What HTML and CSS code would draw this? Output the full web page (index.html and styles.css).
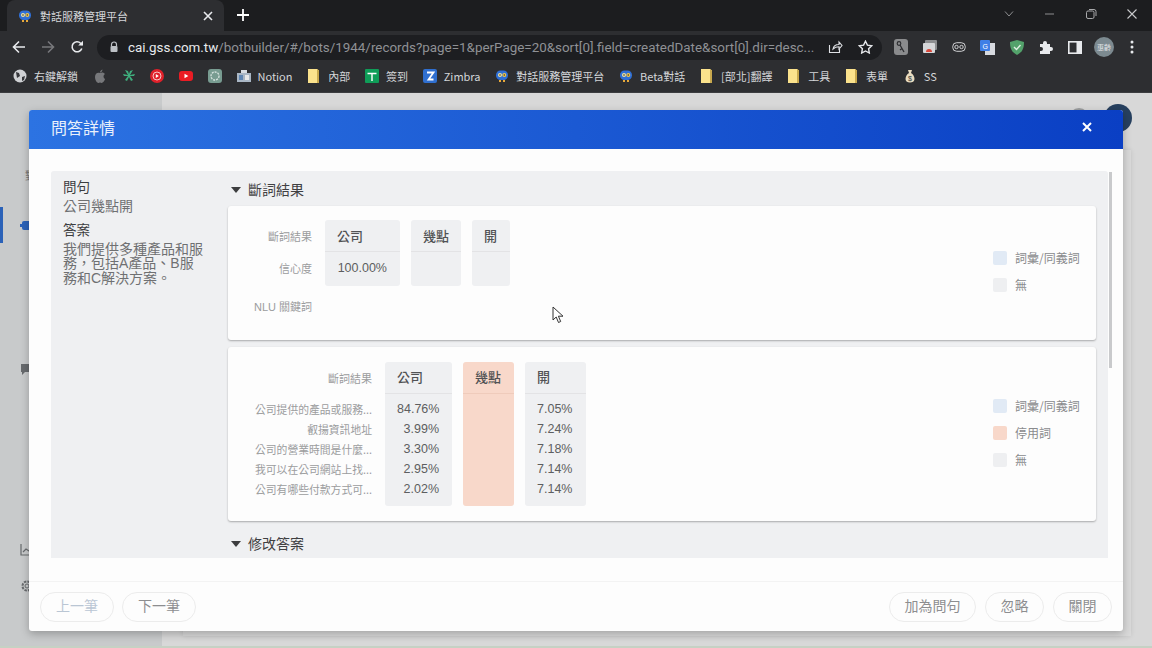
FILE: index.html
```html
<!DOCTYPE html>
<html lang="zh-TW">
<head>
  <meta charset="UTF-8" />
  <title>對話服務管理平台</title>
  <link rel="stylesheet" href="styles.css">
</head>
<body>

  <svg class="defs" width="0" height="0">
    <symbol id="bot" viewBox="0 0 14 14">
      <rect x="1" y="1.5" width="12" height="9.5" rx="4.5" fill="#2f6fd6"/>
      <circle cx="5" cy="6" r="2" fill="#f4e6a0"/>
      <circle cx="9.3" cy="6" r="2" fill="#f4c94a"/>
      <circle cx="5" cy="6" r=".8" fill="#333"/>
      <circle cx="9.3" cy="6" r=".8" fill="#333"/>
      <rect x="4" y="11" width="2" height="2" fill="#e8a93a"/>
      <rect x="8" y="11" width="2" height="2" fill="#e8a93a"/>
    </symbol>
    <symbol id="folder" viewBox="0 0 14 14">
      <path d="M1 0h9l2 1.5V14H1z" fill="#fbe28c"/>
      <path d="M10 0l2 1.5V14H10z" fill="#c9a94e"/>
    </symbol>
  </svg>

  <div class="tabstrip">
    <div class="tab">
      <svg class="fav" width="14" height="14"><use href="#bot"/></svg>
      <span class="tab-title">對話服務管理平台</span>
      <svg class="tab-close" width="10" height="10" viewBox="0 0 10 10"><path d="M1 1l8 8M9 1l-8 8" stroke="#e8eaed" stroke-width="1.6"/></svg>
    </div>
    <svg class="new-tab" width="12" height="12" viewBox="0 0 12 12"><path d="M6 0v12M0 6h12" stroke="#fff" stroke-width="1.8"/></svg>
    <div class="win-ctrls">
      <svg width="12" height="8" viewBox="0 0 12 8"><path d="M2 1.5l4 4.5 4-4.5" fill="none" stroke="#8d8e90"/></svg>
      <svg width="12" height="8" viewBox="0 0 12 8"><path d="M1 4h9" stroke="#8d8e90"/></svg>
      <svg width="12" height="12" viewBox="0 0 12 12"><rect x="1.5" y="3" width="7.5" height="7.5" rx="1.5" fill="none" stroke="#a8a9ab"/><path d="M4 1.5h5a2 2 0 0 1 2 2V8" fill="none" stroke="#a8a9ab"/></svg>
      <svg width="12" height="12" viewBox="0 0 12 12"><path d="M1.5 1.5l9 9M10.5 1.5l-9 9" stroke="#c8c9cb" stroke-width="1.1"/></svg>
    </div>
  </div>

  <div class="toolbar">
    <div class="nav-btn">
      <svg width="14" height="14" viewBox="0 0 14 14"><path d="M13 7H2M7 1.5L1.5 7 7 12.5" fill="none" stroke="#e8eaed" stroke-width="1.6"/></svg>
    </div>
    <div class="nav-btn">
      <svg width="14" height="14" viewBox="0 0 14 14"><path d="M1 7h11M7 1.5L12.5 7 7 12.5" fill="none" stroke="#77787b" stroke-width="1.6"/></svg>
    </div>
    <div class="nav-btn">
      <svg width="14" height="14" viewBox="0 0 14 14"><path d="M11.8 8.5A5 5 0 1 1 10.6 3.2L12.5 5" fill="none" stroke="#e8eaed" stroke-width="1.6"/><path d="M13 .8V5.6H8.2z" fill="#e8eaed"/></svg>
    </div>
    <div class="omnibox">
      <svg class="lock" width="10" height="12" viewBox="0 0 10 12"><path d="M2.5 5V3.5a2.5 2.5 0 0 1 5 0V5" fill="none" stroke="#bdc1c6" stroke-width="1.2"/><rect x="1.5" y="5" width="7" height="6" rx="1" fill="#bdc1c6"/></svg>
      <span class="url"><b>cai.gss.com.tw</b>/botbuilder/#/bots/1944/records?page=1&amp;perPage=20&amp;sort[0].field=createdDate&amp;sort[0].dir=desc...</span>
      <svg class="omni-icon" width="15" height="14" viewBox="0 0 15 14"><path d="M1.5 5v7.5h10V9M5 9c.5-3 3-4.500 6-4.500V2l3 3.500-3 3.500V6.800C8.500 6.800 6.500 7.500 5 9z" fill="none" stroke="#dfe1e5" stroke-width="1.1"/></svg>
      <svg class="omni-icon" width="15" height="14" viewBox="0 0 15 14"><path d="M7.500 1.200l1.900 3.900 4.300.6-3.100 3 .7 4.300-3.800-2-3.800 2 .7-4.300-3.100-3 4.300-.6z" fill="none" stroke="#e8eaed" stroke-width="1.4"/></svg>
    </div>
    <div class="ext-row">
      <div class="ext"><svg width="14" height="16" viewBox="0 0 14 16"><rect width="14" height="16" rx="3" fill="#8a8b8d"/><circle cx="5" cy="4.500" r="1.800" fill="none" stroke="#2d2e31" stroke-width="1.200"/><path d="M6 6l4 7M8 9.500l-2 1.500" stroke="#2d2e31" stroke-width="1.300"/></svg></div>
      <div class="ext"><svg width="14" height="14" viewBox="0 0 14 14"><rect x="2" width="12" height="10" rx="1" fill="#8d8e90"/><rect y="3" width="12" height="10" rx="1" fill="#d6d7d9"/><path d="M3 12a3 3 0 0 1 6 0z" fill="#d9483b"/></svg></div>
      <div class="ext"><svg width="14" height="12" viewBox="0 0 14 12"><rect x=".7" y="1.700" width="12.600" height="8.600" rx="4" fill="none" stroke="#cfd0d2"/><circle cx="4.500" cy="6" r="1.700" fill="none" stroke="#cfd0d2"/><circle cx="9.500" cy="6" r="1.700" fill="none" stroke="#cfd0d2"/></svg></div>
      <div class="ext"><svg width="15" height="15" viewBox="0 0 15 15"><rect x="5" y="3" width="10" height="12" fill="#d7dadf"/><rect width="10" height="11" rx="1" fill="#3f7fe6"/><text x="2.500" y="8.500" font-size="7" fill="#fff" font-family="Liberation Sans">G</text></svg></div>
      <div class="ext"><svg width="14" height="15" viewBox="0 0 14 15"><path d="M7 0l7 2c0 6-1.500 10-7 13C1.500 12 0 8 0 2z" fill="#53a26b"/><path d="M4 7l2.500 2.500L10.500 5" fill="none" stroke="#dff0e3" stroke-width="1.400"/></svg></div>
      <div class="ext"><svg width="14" height="14" viewBox="0 0 14 14"><path d="M1 4h3V3a2 2 0 0 1 4 0v1h3v3h1a2 2 0 0 1 0 4h-1v3H1v-3h1a2 2 0 0 0 0-4H1z" fill="#e8eaed"/></svg></div>
      <div class="ext"><svg width="14" height="13" viewBox="0 0 14 13"><rect x=".8" y=".8" width="12.400" height="11.400" fill="none" stroke="#e8eaed" stroke-width="1.600"/><rect x="8.500" y="1" width="4.500" height="11" fill="#e8eaed"/></svg></div>
      <div class="profile">惠齡</div>
      <svg class="kebab" width="4" height="14" viewBox="0 0 4 14"><circle cx="2" cy="2" r="1.500" fill="#e8eaed"/><circle cx="2" cy="7" r="1.500" fill="#e8eaed"/><circle cx="2" cy="12" r="1.500" fill="#e8eaed"/></svg>
    </div>
  </div>

  <div class="bookmarks">
    <div class="bm"><svg width="14" height="14" viewBox="0 0 14 14"><circle cx="7" cy="7" r="6.500" fill="#cfd1d4"/><path d="M3 3l3 1 1 3-3 2zM9 8l3-1-1 4-2 1z" fill="#35363a"/></svg><span>右鍵解鎖</span></div>
    <div class="bm"><svg width="14" height="14" viewBox="0 0 14 14"><path d="M7 4C5 3 2 4 2 8c0 3 2 6 3.500 6 .7 0 1-.5 1.500-.5s.8.500 1.500.5C10 14 12 11 12 10c-2-1-2-4 0-5-1-1.500-3-2-5-1zM7 3.500C7 2 8 1 9.500.5 9.500 2 8.500 3.500 7 3.500z" fill="#77787b"/></svg></div>
    <div class="bm"><svg width="14" height="14" viewBox="0 0 14 14"><path d="M6 6L3 1l3 1 1 3 1-3 3-1-3 5 5-1-1 2-4 0 3 4-2 1-2-4-2 4-2-1 3-4-4 0-1-2z" fill="#3fae7d"/></svg></div>
    <div class="bm"><svg width="14" height="14" viewBox="0 0 14 14"><circle cx="7" cy="7" r="7" fill="#e0202a"/><circle cx="7" cy="7" r="4" fill="none" stroke="#f7c4c4"/><path d="M5.800 5v4l3-2z" fill="#fff"/></svg></div>
    <div class="bm"><svg width="14" height="14" viewBox="0 0 14 14"><rect y="2" width="14" height="10" rx="3" fill="#ea1c24"/><path d="M5.500 4.800v4.400L9.300 7z" fill="#fff"/></svg></div>
    <div class="bm"><svg width="14" height="14" viewBox="0 0 14 14"><rect width="14" height="14" rx="3" fill="#789c91"/><circle cx="7" cy="7" r="4" fill="none" stroke="#d6e2de" stroke-width="1.300" stroke-dasharray="2 1"/></svg></div>
    <div class="bm"><svg width="14" height="14" viewBox="0 0 14 14"><rect y="4" width="14" height="9" fill="#a9b6c4"/><rect x="4" y="1" width="6" height="3" fill="#d8dde3"/><rect x="2" y="6" width="4" height="5" fill="#5f86b3"/><rect x="8" y="6" width="4" height="5" fill="#e8e9ea"/></svg><span>Notion</span></div>
    <div class="bm"><svg width="14" height="14"><use href="#folder"/></svg><span>內部</span></div>
    <div class="bm"><svg width="14" height="14" viewBox="0 0 14 14"><rect width="14" height="14" rx="1" fill="#0f9d58"/><path d="M2.500 4.500h9M7 4.500V12" stroke="#fff" stroke-width="1.400"/></svg><span>簽到</span></div>
    <div class="bm"><svg width="14" height="14" viewBox="0 0 14 14"><rect width="14" height="14" rx="2" fill="#2f6fd0"/><path d="M4 3.500h6.500L5.500 10.500h5" fill="none" stroke="#fff" stroke-width="1.800"/></svg><span>Zimbra</span></div>
    <div class="bm"><svg width="14" height="14"><use href="#bot"/></svg><span>對話服務管理平台</span></div>
    <div class="bm"><svg width="14" height="14"><use href="#bot"/></svg><span>Beta對話</span></div>
    <div class="bm"><svg width="14" height="14"><use href="#folder"/></svg><span>[部北]翻譯</span></div>
    <div class="bm"><svg width="14" height="14"><use href="#folder"/></svg><span>工具</span></div>
    <div class="bm"><svg width="14" height="14"><use href="#folder"/></svg><span>表單</span></div>
    <div class="bm"><svg width="14" height="14" viewBox="0 0 14 14"><path d="M5 1h4L8 4c2 1 3.500 3.500 3.500 6 0 2.500-2 3.500-4.500 3.500S2.500 12.500 2.500 10c0-2.500 1.500-5 3.500-6z" fill="#e9dcc0"/><text x="5" y="11.500" font-size="7" fill="#333" font-family="Liberation Sans">$</text></svg><span>SS</span></div>
  </div>

  <div class="page">
    <aside class="sidebar">
      <div class="side-item side-text">對</div>
      <div class="side-item side-active">
        <svg width="14" height="12" viewBox="0 0 14 12"><rect x="2" y="2" width="10" height="9" rx="2" fill="#2b62b8"/><rect y="5" width="14" height="3" fill="#2b62b8"/></svg>
      </div>
      <div class="side-item side-chat">
        <svg width="14" height="13" viewBox="0 0 14 13"><path d="M1 1h12v8H5l-3 3V9H1z" fill="#676a6d"/></svg>
      </div>
      <div class="side-item side-chart">
        <svg width="14" height="12" viewBox="0 0 14 12"><path d="M1 0v11h13M3 8l3-3 3 2 4-4" fill="none" stroke="#676a6d" stroke-width="1.200"/></svg>
      </div>
      <div class="side-item side-gear">
        <svg width="14" height="14" viewBox="0 0 14 14"><circle cx="7" cy="7" r="4.500" fill="none" stroke="#676a6d" stroke-width="2" stroke-dasharray="2.500 1"/><circle cx="7" cy="7" r="2" fill="none" stroke="#676a6d"/></svg>
      </div>
    </aside>
    <main class="main">
      <div class="topbar">
        <div class="avatar-sm"></div>
        <div class="avatar"></div>
      </div>
      <div class="main-card"></div>
    </main>

    <div class="overlay">
      <div class="modal">
        <div class="modal-head">
          <span>問答詳情</span>
          <svg width="10" height="10" viewBox="0 0 10 10"><path d="M1 1l8 8M9 1l-8 8" stroke="#fff" stroke-width="2"/></svg>
        </div>

        <div class="modal-body">
          <div class="panel">
            <div class="summary">
              <h4>問句</h4>
              <p class="question">公司幾點開</p>
              <h4 class="answer-title">答案</h4>
              <p class="answer">我們提供多種產品和服務，包括A產品、B服務和C解決方案。</p>
            </div>

            <div class="results">
              <div class="sec-title"><i class="caret"></i>斷詞結果</div>

              <div class="card card-nlu">
                <div class="words">
                  <div class="labels">
                    <div class="lb-head">斷詞結果</div>
                    <div class="lb-row lb-conf">信心度</div>
                  </div>
                  <div class="col col-nlu col-wide">
                    <div class="col-head">公司</div>
                    <div class="cell">100.00%</div>
                  </div>
                  <div class="col col-nlu">
                    <div class="col-head">幾點</div>
                  </div>
                  <div class="col col-nlu">
                    <div class="col-head">開</div>
                  </div>
                  <div class="legend legend-nlu">
                    <div class="leg"><i class="sw sw-blue"></i>詞彙/同義詞</div>
                    <div class="leg"><i class="sw sw-gray"></i>無</div>
                  </div>
                </div>
                <div class="nlu-row">NLU 關鍵詞</div>
              </div>

              <div class="card card-faq">
                <div class="words">
                  <div class="labels labels-wide">
                    <div class="lb-head">斷詞結果</div>
                    <div class="lb-body">
                      <div class="lb-row">公司提供的產品或服務...</div>
                      <div class="lb-row">叡揚資訊地址</div>
                      <div class="lb-row">公司的營業時間是什麼...</div>
                      <div class="lb-row">我可以在公司網站上找...</div>
                      <div class="lb-row">公司有哪些付款方式可...</div>
                    </div>
                  </div>
                  <div class="col col-first">
                    <div class="col-head">公司</div>
                    <div class="col-body">
                      <div class="cell">84.76%</div>
                      <div class="cell">3.99%</div>
                      <div class="cell">3.30%</div>
                      <div class="cell">2.95%</div>
                      <div class="cell">2.02%</div>
                    </div>
                  </div>
                  <div class="col col-stop">
                    <div class="col-head">幾點</div>
                  </div>
                  <div class="col col-last">
                    <div class="col-head">開</div>
                    <div class="col-body">
                      <div class="cell">7.05%</div>
                      <div class="cell">7.24%</div>
                      <div class="cell">7.18%</div>
                      <div class="cell">7.14%</div>
                      <div class="cell">7.14%</div>
                    </div>
                  </div>
                  <div class="legend legend-faq">
                    <div class="leg"><i class="sw sw-blue"></i>詞彙/同義詞</div>
                    <div class="leg"><i class="sw sw-peach"></i>停用詞</div>
                    <div class="leg"><i class="sw sw-gray"></i>無</div>
                  </div>
                </div>
              </div>

              <div class="sec-title sec-next"><i class="caret"></i>修改答案</div>
            </div>
          </div>
          <div class="scrollbar"></div>
        </div>

        <div class="modal-foot">
          <button class="pill pill-nav pill-off">上一筆</button>
          <button class="pill pill-nav">下一筆</button>
          <div class="foot-right">
            <button class="pill">加為問句</button>
            <button class="pill">忽略</button>
            <button class="pill">關閉</button>
          </div>
        </div>
      </div>
    </div>

    <svg class="cursor" width="13" height="18" viewBox="0 0 13 18"><path d="M1 1v13l3.200-3 2.300 5.500 2.200-1-2.300-5.300H11z" fill="#fff" stroke="#333" stroke-width="1"/></svg>
  </div>

</body>
</html>
```

FILE: styles.css
```css
* {
  box-sizing: border-box;
}

html, body {
  margin: 0;
  height: 648px;
  overflow: hidden;
}

body {
  font-family: "Noto Sans CJK TC", "Liberation Sans", sans-serif;
  background: #d8d8d8;
  display: flex;
  flex-direction: column;
}

.defs {
  position: absolute;
}

svg {
  display: block;
  flex-shrink: 0;
}

/* browser chrome */
.tabstrip {
  height: 31px;
  background: #1c1d1f;
  display: flex;
  align-items: flex-end;
  padding-left: 7px;
}

.tab {
  width: 217px;
  height: 31px;
  background: #2d2e31;
  border-radius: 8px 8px 0 0;
  display: flex;
  align-items: center;
  padding: 0 11px 0 11px;
  color: #d4d6d9;
  font-size: 11px;
}

.tab-title {
  margin-left: 8px;
  flex: 1;
}

.new-tab {
  margin: 0 0 10px 13px;
}

.win-ctrls {
  margin-left: auto;
  display: flex;
  align-items: center;
  height: 27px;
  align-self: flex-start;
  gap: 29px;
  padding-right: 14px;
}

.toolbar {
  height: 32px;
  background: #2d2e31;
  display: flex;
  align-items: center;
  padding-left: 4px;
}

.nav-btn {
  width: 29px;
  display: flex;
  justify-content: center;
}

.omnibox {
  width: 785px;
  height: 25px;
  margin-left: 6px;
  background: #1d1e21;
  border-radius: 13px;
  display: flex;
  align-items: center;
  padding: 0 9px 0 12px;
}

.lock {
  margin-right: 9px;
}

.url {
  font-family: Roboto, "Liberation Sans", sans-serif;
  font-size: 13.400px;
  color: #8f9195;
  flex: 1;
  white-space: nowrap;
  overflow: hidden;
}

.url b {
  font-weight: 400;
  color: #e8eaed;
}

.omni-icon {
  margin-left: 15px;
}

.url + .omni-icon {
  margin-left: 8px;
}

.ext-row {
  display: flex;
  align-items: center;
  padding-left: 4px;
}

.ext {
  width: 29px;
  display: flex;
  justify-content: center;
}

.profile {
  width: 20px;
  height: 20px;
  margin-left: 5px;
  border-radius: 50%;
  background: #7c8a90;
  color: #e3e6e8;
  font-size: 7px;
  line-height: 20px;
  text-align: center;
}

.kebab {
  margin-left: 16px;
}

.bookmarks {
  height: 30px;
  background: #2d2e31;
  display: flex;
  align-items: center;
  gap: 14.750px;
  padding: 0 0 4px 13px;
  border-bottom: 1px solid #3c3d40;
}

.bm {
  display: flex;
  align-items: center;
  gap: 7px;
  color: #d4d6d9;
  font-size: 11px;
  white-space: nowrap;
}

/* page behind the dialog */
.page {
  flex: 1;
  display: flex;
  position: relative;
  background: #d8d8d8;
  border-bottom: 2px solid #c6d1c4;
}

.sidebar {
  width: 162px;
  background: #c8cacb;
  display: flex;
  flex-direction: column;
  align-items: flex-start;
  padding-top: 75px;
}

.side-item {
  padding-left: 20px;
  color: #777;
  font-size: 11px;
  line-height: 14px;
}

.side-text {
  padding-left: 25px;
}

.side-active {
  margin-top: 25px;
  height: 36px;
  display: flex;
  align-items: center;
  padding-left: 17px;
  border-left: 3px solid #2b62b8;
}

.side-chat {
  margin-top: 120px;
}

.side-chart {
  margin-top: 168px;
}

.side-gear {
  margin-top: 23px;
}

.main {
  flex: 1;
  display: flex;
  flex-direction: column;
}

.topbar {
  height: 40px;
  padding: 11px 20px 0 0;
  display: flex;
  justify-content: flex-end;
  gap: 15px;
}

.avatar-sm {
  width: 20px;
  height: 20px;
  margin-top: 4px;
  border-radius: 50%;
  background: #9b9d9f;
}

.avatar {
  width: 28px;
  height: 28px;
  border-radius: 50%;
  background: #27405f;
}

.main-card {
  width: 948px;
  height: 486px;
  margin: 17px 0 0 21px;
  background: #d9d9d9;
  box-shadow: 0 0 5px rgba(0, 0, 0, 0.1);
}

/* dialog */
.overlay {
  position: absolute;
  inset: 0;
  padding: 17px 0 0 29px;
}

.modal {
  width: 1094px;
  height: 521px;
  background: #fdfdfd;
  border-radius: 3px;
  display: flex;
  flex-direction: column;
  box-shadow: 0 3px 8px rgba(0, 0, 0, 0.25);
}

.modal-head {
  height: 39px;
  flex-shrink: 0;
  background: linear-gradient(90deg, #2c73e2, #0a3fc4);
  border-radius: 3px 3px 0 0;
  color: #e9f0fb;
  font-size: 16px;
  display: flex;
  align-items: center;
  justify-content: space-between;
  padding: 0 31px 5px 22px;
}

.modal-body {
  height: 432px;
  padding: 22px 15px 23px 22px;
  position: relative;
}

.panel {
  height: 387px;
  background: #eff0f2;
  border-radius: 3px 3px 0 0;
  display: flex;
  overflow: hidden;
  padding: 0 12px 0 11px;
}

.scrollbar {
  position: absolute;
  top: 23px;
  left: 1080px;
  width: 3px;
  height: 196px;
  background: #c9cacc;
}

.summary {
  width: 166px;
  flex-shrink: 0;
  padding: 9px 22px 0 1px;
  font-family: "Liberation Sans", "Noto Sans CJK TC", sans-serif;
  font-size: 14px;
  color: #6f7072;
}

.summary h4 {
  margin: 0;
  font-size: 13.500px;
  font-weight: 400;
  color: #3c3d3f;
  line-height: 16px;
}

.summary p {
  margin: 0;
  line-height: 14.500px;
}

.question {
  padding-top: 3px;
}

.summary .answer-title {
  margin-top: 9px;
}

.answer {
  padding-top: 3px;
}

.results {
  flex: 1;
  min-width: 0;
}

.sec-title {
  height: 35px;
  display: flex;
  align-items: center;
  padding: 1px 0 0 3px;
  font-size: 14px;
  color: #3f4042;
}

.sec-next {
  height: 43px;
}

.caret {
  width: 0;
  height: 0;
  margin: 2px 7px 0 0;
  border-left: 5px solid transparent;
  border-right: 5px solid transparent;
  border-top: 6px solid #3c3d3f;
}

.card {
  background: #fdfdfd;
  border-radius: 3px;
  box-shadow: 0 1px 2px rgba(0, 0, 0, 0.3);
}

.card-nlu {
  height: 134px;
  padding-top: 14px;
  margin-bottom: 7px;
}

.card-faq {
  height: 174px;
  padding-top: 15px;
}

.card-faq .col-head {
  line-height: 30px;
}

.words {
  display: flex;
  gap: 11px;
}

.labels {
  width: 84px;
  margin-right: 2px;
  font-size: 11px;
  color: #9b9c9e;
  text-align: right;
  white-space: nowrap;
}

.labels-wide {
  width: 144px;
}

.lb-head {
  height: 32px;
  line-height: 32px;
}

.lb-body {
  padding-top: 5px;
  font-size: 10.800px;
}

.lb-row {
  height: 20px;
  line-height: 20px;
}

.lb-conf {
  margin-top: 6px;
}

.col {
  height: 144px;
  min-width: 38px;
  background: #eff0f2;
  border-radius: 3px;
}

.col-nlu {
  height: 66px;
}

.col-wide {
  width: 75px;
}

.col-first {
  width: 67px;
}

.col-stop {
  width: 51px;
  background: #f8d8ca;
}

.col-last {
  width: 61px;
}

.col-head {
  height: 32px;
  line-height: 31px;
  padding: 0 12px;
  font-size: 13px;
  font-weight: 500;
  color: #515254;
  border-bottom: 1px solid #e3e3e5;
}

.col-stop .col-head {
  border-bottom-color: #efcbbb;
}

.col-body {
  padding-top: 5px;
}

.cell {
  height: 20px;
  line-height: 20px;
  padding: 0 13px 0 12px;
  font-family: "Liberation Sans", sans-serif;
  font-size: 12.500px;
  color: #5d5e60;
  text-align: right;
}

.col-last .cell {
  padding-right: 14px;
}

.col-nlu .cell {
  height: 33px;
  line-height: 32px;
  padding-right: 13px;
}

.legend {
  margin-left: auto;
  width: 103px;
  font-size: 12px;
  color: #8a8b8d;
}

.legend-nlu {
  height: 66px;
  padding-top: 24px;
}

.legend-faq {
  padding-top: 30px;
}

.leg {
  height: 27px;
  display: flex;
  align-items: center;
  gap: 8px;
  white-space: nowrap;
}

.sw {
  width: 14px;
  height: 14px;
  border-radius: 2px;
}

.sw-blue {
  background: #e1eaf5;
}

.sw-gray {
  background: #eeeff1;
}

.sw-peach {
  background: #f8d8ca;
}

.nlu-row {
  width: 84px;
  margin-top: 12px;
  font-family: "Liberation Sans", "Noto Sans CJK TC", sans-serif;
  font-size: 11px;
  line-height: 18px;
  color: #9b9c9e;
  text-align: right;
  white-space: nowrap;
}

.modal-foot {
  height: 50px;
  border-top: 1px solid #f3f3f3;
  display: flex;
  align-items: center;
  gap: 8px;
  padding: 0 11px;
}

.foot-right {
  margin-left: auto;
  display: flex;
  gap: 9px;
}

.pill {
  height: 30px;
  padding: 0 14.500px 4px;
  border: 1px solid #ececec;
  border-radius: 15px;
  background: #fdfdfd;
  font-family: inherit;
  font-size: 14px;
  color: #8d8e90;
}

.pill-nav {
  width: 74px;
}

.pill-off {
  color: #bac6d4;
}

.cursor {
  position: absolute;
  left: 552px;
  top: 213px;
}
```
